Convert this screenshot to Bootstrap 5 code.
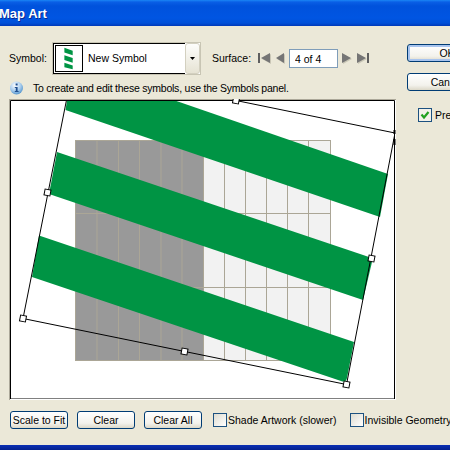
<!DOCTYPE html>
<html lang="en">
<head>
    <meta charset="UTF-8">
    <meta name="viewport" content="width=device-width, initial-scale=1">
    <title>Map Art</title>
    <link rel="stylesheet" href="https://cdn.jsdelivr.net/npm/bootstrap@5.3.0/dist/css/bootstrap.min.css">
    <style>
        html, body { width: 450px; height: 450px; overflow: hidden; }
        body {
            background: #ebe8d8;
            color: #000;
            font-family: "Liberation Sans", sans-serif;
            font-size: 10.5px;
            line-height: 13px;
        }
        .title-bar {
            height: 26px;
            background: linear-gradient(#1a86f5 0, #0a5fe6 2px, #0052dc 6px, #0055e2 18px, #0050d8 23px, #0038b8 26px);
            color: #fff;
            font-size: 13px;
            font-weight: 700;
            line-height: 28px;
            text-shadow: 1px 1px 0 #0a2a90;
            white-space: nowrap;
        }
        .title-bar span { margin-left: -1px; }
        .left-col { width: 407px; flex-shrink: 0; padding-left: 9px; }
        .right-col { width: 80px; flex-shrink: 0; padding-top: 18px; }
        .top-row { height: 33px; margin-top: 16px; }
        .sym-label { width: 43px; }
        .combo {
            width: 149px;
            height: 33px;
            background: #fff;
            border: 1px solid #c8c5b4;
        }
        .combo-inner {
            border-top: 1px solid #000;
            border-left: 1px solid #000;
            border-bottom: 1px solid #000;
            background: #fff;
            padding-left: 1px;
        }
        .thumb { width: 28px; height: 27px; border: 1px solid #000; display: block; flex-shrink: 0; }
        .combo-text { margin-left: 5px; }
        .combo-drop {
            width: 15px;
            background: linear-gradient(#fdfdfb, #e6e3d4);
            border: 1px solid #d3d0c0;
            border-radius: 3px;
        }
        .surface-label { margin-left: 11px; width: 46px; }
        .nav-ico { display: block; }
        .page-box.form-control {
            width: 49px;
            height: 19px;
            min-height: 0;
            padding: 0 5px;
            border: 1px solid #7f9db9;
            border-radius: 0;
            font-size: inherit;
            line-height: 17px;
            margin: 0 4px;
            color: #000;
            background: #fff;
        }
        .hint-row { height: 24px; padding-top: 2px; letter-spacing: -0.23px; }
        .hint-row svg { margin-right: 9px; }
        .art-canvas { display: block; }
        .xp-btn.btn {
            display: block;
            height: 18px;
            padding: 0;
            font-size: inherit;
            line-height: 15px;
            color: #000;
            background: linear-gradient(#fff, #f3f2ec 70%, #dcd8c8);
            border: 1px solid #003c74;
            border-radius: 3px;
            white-space: nowrap;
        }
        .side-btn.btn { width: 80px; }
        .side-btn.def-btn { box-shadow: inset 0 0 0 2px #a8c4ee; }
        .side-btn + .side-btn { margin-top: 11px; }
        .preview-row { margin-top: 17px; margin-left: 11px; white-space: nowrap; }
        .xp-check.form-check-input {
            width: 14px;
            height: 14px;
            margin: 0;
            flex-shrink: 0;
            border: 1px solid #1c5180;
            border-radius: 0;
            background-color: #f2f1ea;
            background-image: linear-gradient(135deg, #dedcd0, #fff);
        }
        .xp-check.form-check-input:checked {
            background-color: #f2f1ea;
            border-color: #1c5180;
            background-image: url("data:image/svg+xml,%3Csvg xmlns='http://www.w3.org/2000/svg' viewBox='0 0 12 12'%3E%3Cpath d='M2.5 5.5 5 8.5 9.5 3' fill='none' stroke='%2321a121' stroke-width='2.2'/%3E%3C/svg%3E");
            background-size: 12px 12px;
        }
        .preview-row label { margin-left: 3px; }
        .bottom-row { margin-top: 11px; padding-left: 10px; white-space: nowrap; }
        .bottom-row .xp-btn { width: 58px; margin-right: 9px; flex-shrink: 0; }
        .bottom-row .xp-check { margin-left: 2px; margin-right: 1px; }
        .bottom-row label { flex-shrink: 0; }
        .bottom-row .check-gap { margin-right: 11px; }
        .base-bar {
            position: fixed;
            left: 0;
            right: 0;
            bottom: 0;
            height: 5px;
            background: linear-gradient(#0a2fb5, #04208c);
        }
    </style>
</head>
<body>

    <div class="title-bar"><span>Map Art</span></div>

    <div class="d-flex">
        <div class="left-col">
            <!-- symbol and surface -->
            <div class="top-row d-flex align-items-center">
                <span class="sym-label">Symbol:</span>
                <div class="combo d-flex">
                    <div class="combo-inner flex-grow-1 d-flex align-items-center">
                        <svg class="thumb" width="28" height="27" viewBox="0 0 28 27">
                            <polygon points="9,2 18,5 18,10 9,7" fill="#009444"/>
                            <polygon points="9,10 18,13 18,18 9,15" fill="#009444"/>
                            <polygon points="9,18 18,21 18,25 9,23" fill="#009444"/>
                        </svg>
                        <span class="combo-text">New Symbol</span>
                    </div>
                    <div class="combo-drop d-flex align-items-center justify-content-center">
                        <svg width="5" height="3" viewBox="0 0 5 3"><polygon points="0,0 5,0 2.5,3" fill="#000"/></svg>
                    </div>
                </div>
                <span class="surface-label">Surface:</span>
                <svg class="nav-ico" width="14" height="13" viewBox="0 0 14 13"><polygon points="4,7 13,2 13,12" fill="#c9c6b6"/><rect x="0" y="1" width="2" height="10" fill="#5f5f5f"/><polygon points="3,6 12,1 12,11" fill="#757575"/></svg>
                <svg class="nav-ico ms-1" width="9" height="13" viewBox="0 0 9 13"><polygon points="1,7 9,2 9,12" fill="#c9c6b6"/><polygon points="0,6 8,1 8,11" fill="#757575"/></svg>
                <input class="page-box form-control" type="text" value="4 of 4">
                <svg class="nav-ico" width="11" height="13" viewBox="0 0 11 13"><polygon points="1,2 10,7 1,12" fill="#c9c6b6"/><polygon points="0,1 9,6 0,11" fill="#757575"/></svg>
                <svg class="nav-ico ms-1" width="13" height="13" viewBox="0 0 13 13"><polygon points="1,2 10,7 1,12" fill="#c9c6b6"/><polygon points="0,1 9,6 0,11" fill="#757575"/><rect x="10" y="1" width="2" height="10" fill="#5f5f5f"/></svg>
            </div>

            <div class="hint-row d-flex align-items-center">
                <svg width="15" height="15" viewBox="0 0 15 15">
                    <defs><radialGradient id="infoBlue" cx="40%" cy="30%" r="75%"><stop offset="0" stop-color="#fff"/><stop offset=".55" stop-color="#a9cdee"/><stop offset="1" stop-color="#4c8fc9"/></radialGradient></defs>
                    <circle cx="7.5" cy="7" r="6.5" fill="url(#infoBlue)"/>
                    <rect x="6.6" y="2.500" width="2" height="2" fill="#1f4f8f"/>
                    <path d="M5.800 6h2.800v4h1v1H5.800v-1h1V7h-1z" fill="#1f4f8f"/>
                </svg>
                <span>To create and edit these symbols, use the Symbols panel.</span>
            </div>

            <!-- artwork preview, drawn in page pixels via the viewBox -->
            <svg class="art-canvas" width="387" height="301" viewBox="9 99 387 301">
                <rect x="9" y="99" width="387" height="301" fill="#fff"/>
                <path d="M9 400V99h387" fill="none" stroke="#aca899" stroke-width="2"/>
                <rect x="75" y="140" width="129" height="221" fill="#999"/>
                <rect x="204" y="140" width="127" height="221" fill="#f2f2f2"/>
                <path d="M75.500 140v221M97 140v221M118.500 140v221M139.500 140v221M161 140v221M182 140v221M203.500 140v221M224.500 140v221M245.500 140v221M266.500 140v221M287.500 140v221M308.500 140v221M330.500 140v221M75 140.500h256M75 213.500h256M75 287.500h256M75 360.500h256" fill="none" stroke="#aba696" stroke-width="1"/>
                <polygon points="67,100.500 175,100.500 388,174 380,217 65.500,110" fill="#009444"/>
                <path d="M57 152 369 257Q372.500 258.500 372 262L363 300 49 194z" fill="#009444"/>
                <path d="M39 235.500 354 342 347 378Q346 383 341 381L32 277z" fill="#009444"/>
                <path d="M66.500 100 23 318.500 346.500 384.500 395 133 236 100.500" fill="none" stroke="#000" stroke-width="1"/>
                <path d="M10.500 399V100.500H394.500V399z" fill="none" stroke="#000" stroke-width="1"/>
                <path d="M395.500 100v300M10 399.500h386" stroke="#fff" fill="none"/>
                <g fill="#fff" stroke="#000" stroke-width="1">
                    <rect x="-3" y="-3" width="6" height="6" transform="translate(47.500 192.500) rotate(11)"/>
                    <rect x="-3" y="-3" width="6" height="6" transform="translate(23 318.500) rotate(11)"/>
                    <rect x="-3" y="-3" width="6" height="6" transform="translate(184.500 351.500) rotate(11)"/>
                    <rect x="-3" y="-3" width="6" height="6" transform="translate(346.500 384.500) rotate(11)"/>
                    <rect x="-3" y="-3" width="6" height="6" transform="translate(371.500 258.500) rotate(11)"/>
                    <rect x="-3" y="-3" width="6" height="6" transform="translate(236 100.500) rotate(11)"/>
                </g>
                <path d="M394.500 130v4M394.500 139v6" stroke="#000" stroke-width="2"/>
            </svg>
        </div>

        <div class="right-col">
            <button class="btn xp-btn side-btn def-btn" type="button">OK</button>
            <button class="btn xp-btn side-btn" type="button">Cancel</button>
            <div class="preview-row d-flex align-items-center">
                <input class="form-check-input xp-check" type="checkbox" id="prevCheck" checked>
                <label for="prevCheck">Preview</label>
            </div>
        </div>
    </div>

    <div class="bottom-row d-flex align-items-center">
        <button class="btn xp-btn" type="button">Scale to Fit</button>
        <button class="btn xp-btn" type="button">Clear</button>
        <button class="btn xp-btn" type="button">Clear All</button>
        <input class="form-check-input xp-check" type="checkbox" id="shadeCheck">
        <label class="check-gap" for="shadeCheck">Shade Artwork (slower)</label>
        <input class="form-check-input xp-check" type="checkbox" id="invisCheck">
        <label for="invisCheck">Invisible Geometry</label>
    </div>

    <div class="base-bar"></div>

    <script src="https://cdn.jsdelivr.net/npm/bootstrap@5.3.0/dist/js/bootstrap.bundle.min.js"></script>
</body>
</html>
